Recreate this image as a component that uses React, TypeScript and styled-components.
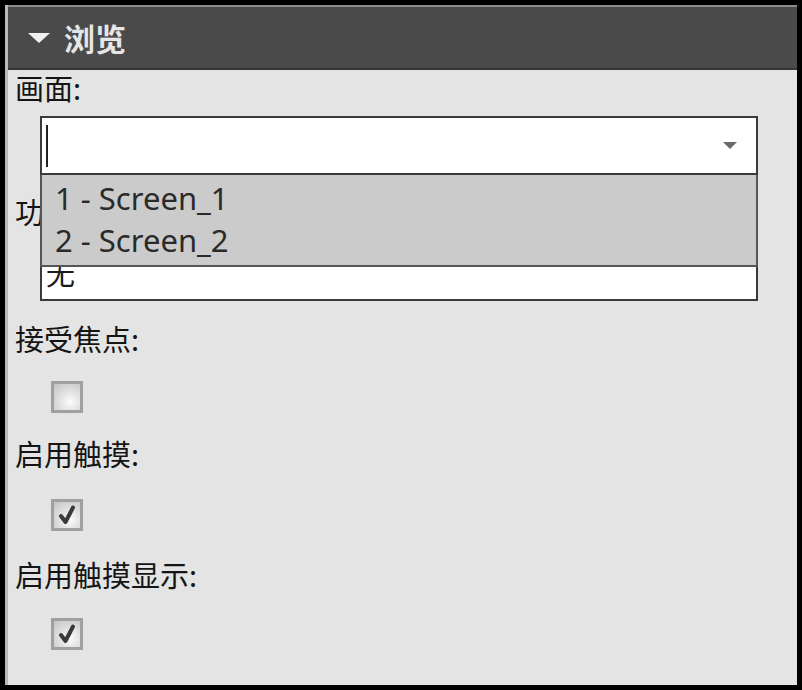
import React from "react";
import styled, { createGlobalStyle } from "styled-components";

const GlobalStyle = createGlobalStyle`
  html, body {
    margin: 0;
    padding: 0;
    background: #000;
  }
  * {
    box-sizing: border-box;
  }
`;

const cjk = `"Noto Sans CJK SC", "Noto Sans", sans-serif`;

const Frame = styled.div`
  width: 802px;
  height: 690px;
  background: #000;
  padding: 5px;
`;

const Panel = styled.div`
  height: 100%;
  display: flex;
  flex-direction: column;
  background: #e4e4e4;
  border-left: 3px solid #b9b9b9;
`;

const Header = styled.div`
  height: 65px;
  flex-shrink: 0;
  display: flex;
  align-items: center;
  gap: 14px;
  padding-left: 20px;
  background: #4a4a4a;
  border-top: 2px solid #8c8c8c;
  border-bottom: 2px solid #363636;
`;

const Caret = styled.span`
  width: 0;
  height: 0;
  border-left: 11px solid transparent;
  border-right: 11px solid transparent;
  border-top: 10px solid #f2f2f2;
`;

const HeaderTitle = styled.span`
  font-family: ${cjk};
  font-size: 31px;
  font-weight: 700;
  color: #e6e6e6;
  line-height: 1;
`;

const Body = styled.div`
  display: flex;
  flex-direction: column;
  padding-left: 7px;
`;

const Label = styled.div<{ $top: number }>`
  font-family: ${cjk};
  font-size: 29px;
  line-height: 34px;
  color: #151515;
  margin-top: ${(p) => p.$top}px;
`;

const FieldWrap = styled.div<{ $top: number }>`
  position: relative;
  margin-left: 25px;
  width: 718px;
  margin-top: ${(p) => p.$top}px;
`;

const Box = styled.div`
  height: 59px;
  background: #fff;
  border: 2px solid #3a3a3a;
  display: flex;
  align-items: center;
  padding-left: 4px;
  font-family: ${cjk};
  font-size: 29px;
  color: #1c1c1c;
`;

const Cursor = styled.span`
  width: 2px;
  height: 42px;
  background: #222;
`;

const Spacer = styled.span`
  flex: 1;
`;

const DropArrow = styled.span`
  width: 0;
  height: 0;
  margin-right: 19px;
  border-left: 7px solid transparent;
  border-right: 7px solid transparent;
  border-top: 7px solid #6a6a6a;
`;

const List = styled.div`
  position: absolute;
  top: 100%;
  left: 0;
  right: 0;
  z-index: 2;
  background: #cbcbcb;
  border: 2px solid #555;
  border-top: none;
  padding: 2px 0 4px 0;
`;

const Option = styled.div`
  font-family: "Noto Sans", "DejaVu Sans", sans-serif;
  font-size: 31px;
  line-height: 42px;
  height: 42px;
  padding-left: 13px;
  color: #2a2a2a;
`;

const Check = styled.div<{ $top: number }>`
  width: 32px;
  height: 32px;
  margin-left: 36px;
  margin-top: ${(p) => p.$top}px;
  border: 3px solid #a0a0a0;
  background: radial-gradient(circle at 62% 68%, #fbfbfb 0%, #dedede 50%, #c2c2c2 100%);
  display: flex;
  align-items: center;
  justify-content: center;
`;

const CheckMark = () => (
  <svg width="22" height="22" viewBox="0 0 22 22">
    <path
      d="M5 12 L9.5 18 L17 3.5"
      fill="none"
      stroke="#3a3a3a"
      strokeWidth="4"
      strokeLinecap="round"
      strokeLinejoin="round"
    />
  </svg>
);

export default function App() {
  return (
    <>
      <GlobalStyle />
      <Frame>
        <Panel>
          <Header>
            <Caret />
            <HeaderTitle>浏览</HeaderTitle>
          </Header>
          <Body>
            <Label $top={0}>画面:</Label>
            <FieldWrap $top={12}>
              <Box>
                <Cursor />
                <Spacer />
                <DropArrow />
              </Box>
              <List>
                <Option>1 - Screen_1</Option>
                <Option>2 - Screen_2</Option>
              </List>
            </FieldWrap>
            <Label $top={19}>功能:</Label>
            <FieldWrap $top={14}>
              <Box>无</Box>
            </FieldWrap>
            <Label $top={20}>接受焦点:</Label>
            <Check $top={26} />
            <Label $top={23}>启用触摸:</Label>
            <Check $top={29}>
              <CheckMark />
            </Check>
            <Label $top={26}>启用触摸显示:</Label>
            <Check $top={27}>
              <CheckMark />
            </Check>
          </Body>
        </Panel>
      </Frame>
    </>
  );
}
